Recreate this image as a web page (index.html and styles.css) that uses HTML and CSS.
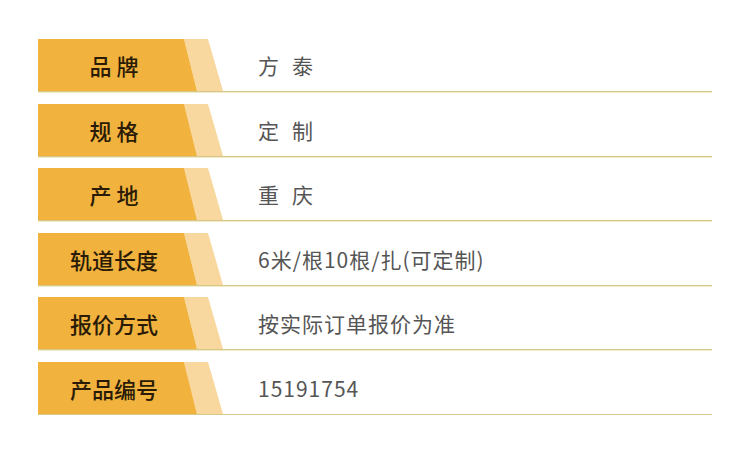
FILE: index.html
```html
<!DOCTYPE html>
<html lang="zh">
<head>
<meta charset="utf-8">
<link rel="stylesheet" href="styles.css">
</head>
<body>
<div class="table">
  <div class="row">
    <div class="tag"><svg class="bg" viewBox="0 0 185 52" preserveAspectRatio="none"><polygon points="146,0 170,0 185,52 159,52" fill="#F8D89E"/><polygon points="0,0 146,0 159,52 0,52" fill="#F1B23E"/></svg><span class="label">品 牌</span></div>
    <div class="value wide">方 泰</div>
  </div>
  <div class="row">
    <div class="tag"><svg class="bg" viewBox="0 0 185 52" preserveAspectRatio="none"><polygon points="146,0 170,0 185,52 159,52" fill="#F8D89E"/><polygon points="0,0 146,0 159,52 0,52" fill="#F1B23E"/></svg><span class="label">规 格</span></div>
    <div class="value wide">定 制</div>
  </div>
  <div class="row">
    <div class="tag"><svg class="bg" viewBox="0 0 185 52" preserveAspectRatio="none"><polygon points="146,0 170,0 185,52 159,52" fill="#F8D89E"/><polygon points="0,0 146,0 159,52 0,52" fill="#F1B23E"/></svg><span class="label">产 地</span></div>
    <div class="value wide">重 庆</div>
  </div>
  <div class="row">
    <div class="tag"><svg class="bg" viewBox="0 0 185 52" preserveAspectRatio="none"><polygon points="146,0 170,0 185,52 159,52" fill="#F8D89E"/><polygon points="0,0 146,0 159,52 0,52" fill="#F1B23E"/></svg><span class="label">轨道长度</span></div>
    <div class="value">6米/根10根/扎(可定制)</div>
  </div>
  <div class="row">
    <div class="tag"><svg class="bg" viewBox="0 0 185 52" preserveAspectRatio="none"><polygon points="146,0 170,0 185,52 159,52" fill="#F8D89E"/><polygon points="0,0 146,0 159,52 0,52" fill="#F1B23E"/></svg><span class="label">报价方式</span></div>
    <div class="value">按实际订单报价为准</div>
  </div>
  <div class="row">
    <div class="tag"><svg class="bg" viewBox="0 0 185 52" preserveAspectRatio="none"><polygon points="146,0 170,0 185,52 159,52" fill="#F8D89E"/><polygon points="0,0 146,0 159,52 0,52" fill="#F1B23E"/></svg><span class="label">产品编号</span></div>
    <div class="value">15191754</div>
  </div>
</div>
</body>
</html>
```

FILE: styles.css
```css
html, body {
  margin: 0;
  padding: 0;
  background: #ffffff;
}
.table {
  padding: 39px 0 0 38px;
  width: 674px;
  display: flex;
  flex-direction: column;
  gap: 11.6px;
}
.row {
  display: flex;
  align-items: center;
  height: 52px;
  border-bottom: 1px solid #D6C889;
  box-shadow: 0 1px 0 #F2EBC8;
}
.tag {
  position: relative;
  width: 185px;
  height: 52px;
  flex: none;
}
.bg {
  position: absolute;
  left: 0;
  top: 0;
  width: 185px;
  height: 52px;
  display: block;
}
.label {
  position: relative;
  display: flex;
  align-items: center;
  justify-content: center;
  width: 152px;
  height: 52px;
  font-family: "Noto Sans CJK SC", "Noto Sans", sans-serif;
  font-size: 22px;
  font-weight: 500;
  color: #2A1B06;
  white-space: pre;
}
.value {
  padding-left: 35px;
  font-family: "Noto Sans CJK SC", "Noto Sans", sans-serif;
  font-size: 21px;
  letter-spacing: 1px;
  color: #555555;
  white-space: pre;
}
.value.wide {
  letter-spacing: 4.2px;
}
```
